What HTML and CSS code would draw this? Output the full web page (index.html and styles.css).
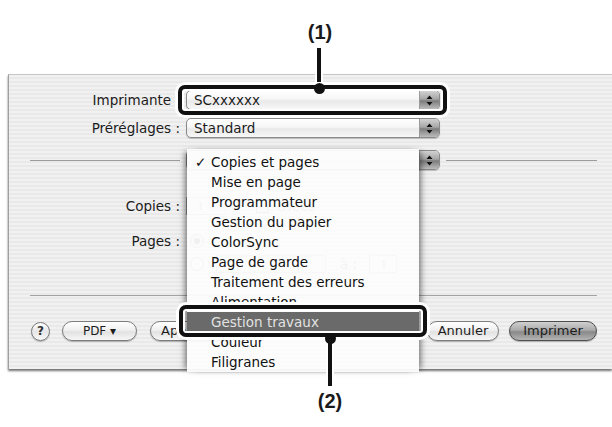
FILE: index.html
```html
<!DOCTYPE html>
<html lang="fr">
<head>
  <meta charset="UTF-8">
  <title>Imprimer</title>
  <link rel="stylesheet" href="styles.css">
</head>
<body>
  <div class="page">
    <div class="dialog">
      <div class="row first">
        <div class="label">Imprimante :</div>
        <div class="popup"><span class="value">SCxxxxxx</span><span class="arrows"><svg width="7" height="11" viewBox="0 0 7 11"><path d="M3.5 0.5 L6.5 4 H0.5Z M0.5 7 H6.5 L3.5 10.5Z" fill="#111"/></svg></span></div>
      </div>
      <div class="row">
        <div class="label">Préréglages :</div>
        <div class="popup"><span class="value">Standard</span><span class="arrows"><svg width="7" height="11" viewBox="0 0 7 11"><path d="M3.5 0.5 L6.5 4 H0.5Z M0.5 7 H6.5 L3.5 10.5Z" fill="#111"/></svg></span></div>
      </div>
      <div class="divider">
        <span class="line short"></span>
        <div class="popup"><span class="value"></span><span class="arrows"><svg width="7" height="11" viewBox="0 0 7 11"><path d="M3.5 0.5 L6.5 4 H0.5Z M0.5 7 H6.5 L3.5 10.5Z" fill="#111"/></svg></span></div>
        <span class="line"></span>
      </div>
      <div class="row copies">
        <div class="label">Copies :</div>
        <div class="field">1</div>
        <span class="check"></span>
        <span class="faint">triées</span>
      </div>
      <div class="row pages">
        <div class="label">Pages :</div>
        <span class="radio on"></span>
      </div>
      <div class="row range">
        <div class="label"></div>
        <span class="radio"></span>
        <div class="field small blank"></div>
        <span class="faint">à :</span>
        <div class="field small">1</div>
      </div>
      <div class="rule"></div>
      <div class="buttons">
        <span class="help">?</span>
        <span class="pill pdf">PDF ▾</span>
        <span class="pill preview">Aperçu</span>
        <span class="spacer"></span>
        <span class="pill cancel">Annuler</span>
        <span class="pill default">Imprimer</span>
      </div>
    </div>

    <ul class="menu">
      <li class="checked">Copies et pages</li>
      <li>Mise en page</li>
      <li>Programmateur</li>
      <li>Gestion du papier</li>
      <li>ColorSync</li>
      <li>Page de garde</li>
      <li>Traitement des erreurs</li>
      <li>Alimentation</li>
      <li class="selected">Gestion travaux</li>
      <li>Couleur</li>
      <li>Filigranes</li>
    </ul>

    <!-- callout (1) -->
    <div class="num one">(1)</div>
    <div class="stem one"></div>
    <div class="callout one"></div>
    <div class="dot one"></div>

    <!-- callout (2) -->
    <div class="callout two"></div>
    <div class="stem two"></div>
    <div class="dot two"></div>
    <div class="num two">(2)</div>
  </div>
</body>
</html>
```

FILE: styles.css
```css
body {
  margin: 0;
  background: #fff;
  font-family: 'DejaVu Sans', sans-serif;
  font-size: 13.5px;
  color: #1c1c1c;
}
.page {
  position: relative;
  width: 612px;
  height: 427px;
  overflow: hidden;
}
.dialog {
  margin: 74px 0 0 8px;
  height: 295px;
  box-sizing: border-box;
  padding: 15px 15px 0 0;
  border-top: 1px solid #c6c6c6;
  border-left: 1px solid #a0a0a0;
  background: repeating-linear-gradient(to bottom, #f1f1f1 0 2px, #e9e9e9 2px 4px);
  box-shadow: 0 2px 2px rgba(0, 0, 0, 0.55);
}
.row {
  display: flex;
  align-items: center;
  height: 20px;
  margin-bottom: 8px;
}
.label {
  width: 177px;
  flex: none;
  box-sizing: border-box;
  padding-right: 6px;
  text-align: right;
  white-space: nowrap;
}
.popup {
  width: 254px;
  height: 20px;
  flex: none;
  box-sizing: border-box;
  display: flex;
  border: 1px solid #8a8a8a;
  border-radius: 5px;
  background: linear-gradient(#ffffff, #f6f6f6 45%, #e9e9e9 55%, #f7f7f7);
  box-shadow: 0 1px 1px rgba(0, 0, 0, 0.2);
  overflow: hidden;
}
.popup .value {
  flex: 1;
  padding-left: 7px;
  line-height: 18px;
  white-space: nowrap;
}
.popup .arrows {
  width: 19px;
  display: flex;
  align-items: center;
  justify-content: center;
  border-left: 1px solid #9a9a9a;
  background: linear-gradient(#d2d2d2, #a6a6a6 45%, #7c7c7c 55%, #bcbcbc);
}
.divider {
  display: flex;
  align-items: center;
  height: 20px;
  margin-top: 12px;
  padding-left: 21px;
}
.divider .line {
  flex: 1;
  height: 1px;
  background: #9c9c9c;
}
.divider .line.short {
  flex: none;
  width: 150px;
}
.divider .popup {
  margin: 0 6px;
}
.row.copies {
  margin-top: 26px;
  margin-bottom: 15px;
}
.row.range {
  margin-top: -5px;
}
.field {
  width: 40px;
  height: 18px;
  box-sizing: border-box;
  border: 1px solid #999;
  background: #fff;
  padding-left: 10px;
  line-height: 16px;
  font-family: 'Liberation Serif', serif;
  color: #666;
  margin-right: 30px;
}
.field.small {
  width: 28px;
  margin: 0 6px;
}
.field.blank {
  width: 110px;
  margin-right: 14px;
}
.check {
  width: 11px;
  height: 11px;
  border: 1px solid #555;
  background: #ddd;
  margin-right: 8px;
}
.radio {
  width: 12px;
  height: 12px;
  border: 1px solid #666;
  border-radius: 50%;
  margin: 0 6px 0 4px;
  background: #eee;
}
.radio.on {
  background: radial-gradient(circle, #333 0 3px, #ddd 3.5px);
}
.faint {
  color: #555;
  margin-right: 6px;
}
.rule {
  height: 1px;
  margin: 21px 0 25px 21px;
  background: #a4a4a4;
}
.buttons {
  display: flex;
  align-items: center;
  height: 20px;
  padding-left: 22px;
  font-size: 13px;
}
.help {
  width: 19px;
  height: 19px;
  box-sizing: border-box;
  border: 1px solid #7a7a7a;
  border-radius: 50%;
  background: linear-gradient(#fff, #e6e6e6 50%, #f8f8f8);
  text-align: center;
  line-height: 17px;
  font-size: 12px;
  font-weight: bold;
  color: #333;
  margin-right: 12px;
  box-shadow: 0 1px 1px rgba(0, 0, 0, 0.25);
}
.pill {
  height: 20px;
  box-sizing: border-box;
  border: 1px solid #7c7c7c;
  border-radius: 10px;
  background: linear-gradient(#ffffff, #f0f0f0 45%, #e2e2e2 55%, #f7f7f7);
  box-shadow: 0 1px 1px rgba(0, 0, 0, 0.25);
  text-align: center;
  line-height: 18px;
}
.pill.pdf {
  width: 75px;
  margin-right: 13px;
  font-size: 12px;
}
.pill.preview {
  width: 90px;
  text-align: left;
  padding-left: 10px;
}
.spacer {
  flex: 1;
}
.pill.cancel {
  width: 72px;
  margin-right: 10px;
}
.pill.default {
  width: 88px;
  border-color: #4e4e4e;
  background: linear-gradient(#d0d0d0, #aaaaaa 45%, #888888 55%, #b4b4b4);
}
.menu {
  position: absolute;
  left: 187px;
  top: 149px;
  width: 232px;
  height: 223px;
  margin: 0;
  padding: 3px 0 0;
  box-sizing: border-box;
  list-style: none;
  background: rgba(252, 252, 252, 0.95);
  box-shadow: -5px 0 6px -3px rgba(0, 0, 0, 0.5), 5px 0 6px -3px rgba(0, 0, 0, 0.5);
  color: #111;
  overflow: hidden;
}
.menu li {
  position: relative;
  height: 20px;
  line-height: 20px;
  padding-left: 24px;
  white-space: nowrap;
}
.menu li.checked::before {
  content: "✓";
  position: absolute;
  left: 8px;
}
.menu li.selected {
  background: #6a6a6a;
  color: #e2e2e2;
}
.num {
  position: absolute;
  width: 40px;
  margin-left: -20px;
  text-align: center;
  font-family: 'Liberation Sans', Arial, sans-serif;
  font-weight: bold;
  font-size: 20px;
  color: #1a1a1a;
}
.num.one { left: 320px; top: 21px; }
.num.two { left: 330px; top: 390px; }
.stem {
  position: absolute;
  width: 4px;
  background: #111;
  box-shadow: 0 0 0 2px #fff;
}
.stem.one { left: 317px; top: 48px; height: 40px; }
.stem.two { left: 328px; top: 338px; height: 48px; }
.callout {
  position: absolute;
  border: 4px solid #111;
  border-radius: 7px;
  box-shadow: 0 0 0 3px #fff, inset 0 0 0 2px #fff;
}
.callout.one { left: 178px; top: 85px; width: 261px; height: 22px; }
.callout.two { left: 179px; top: 305px; width: 240px; height: 24px; }
.dot {
  position: absolute;
  width: 11px;
  height: 11px;
  margin: -5px 0 0 -5px;
  border-radius: 50%;
  background: #111;
}
.dot.one { left: 319px; top: 88px; }
.dot.two { left: 330px; top: 338px; }
```
